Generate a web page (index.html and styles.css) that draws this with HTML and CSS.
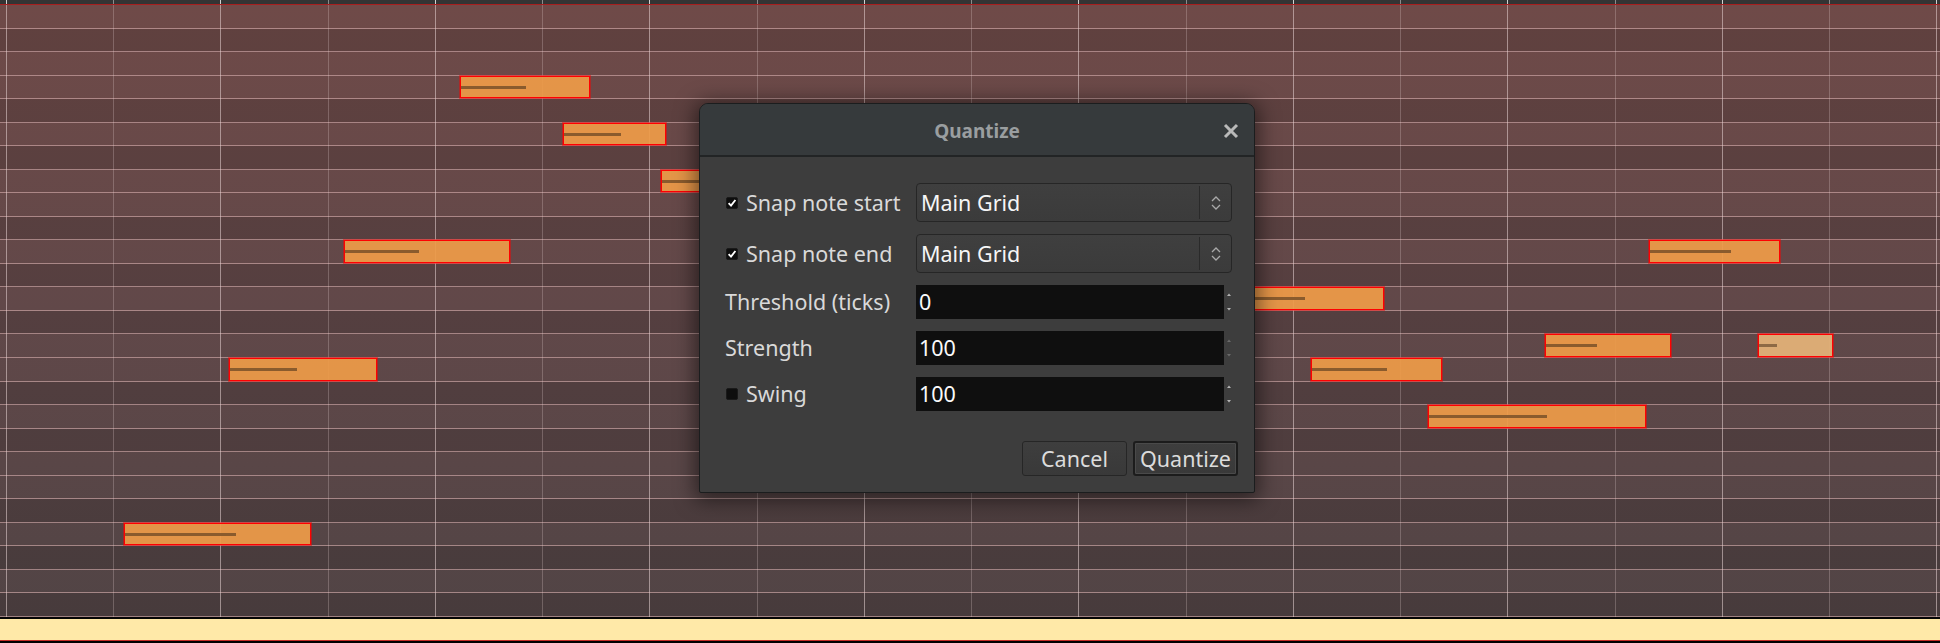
FILE: index.html
```html
<!DOCTYPE html>
<html lang="en">
<head>
<meta charset="utf-8">
<title>Piano roll – Quantize</title>
<link rel="stylesheet" href="styles.css">
</head>
<body>
<div class="app">
  <div class="ruler"></div>
  <div class="roll">
    <div class="row"></div>
    <div class="row dark"></div>
    <div class="row"></div>
    <div class="row">
      <div class="note" style="left:460px;width:130px"><i class="vel" style="width:65px"></i></div>
    </div>
    <div class="row dark"></div>
    <div class="row">
      <div class="note" style="left:563px;width:103px"><i class="vel" style="width:57px"></i></div>
    </div>
    <div class="row dark"></div>
    <div class="row">
      <div class="note" style="left:661px;width:120px"><i class="vel" style="width:70px"></i></div>
    </div>
    <div class="row"></div>
    <div class="row dark"></div>
    <div class="row">
      <div class="note" style="left:344px;width:166px"><i class="vel" style="width:74px"></i></div>
      <div class="note" style="left:1649px;width:131px"><i class="vel" style="width:81px"></i></div>
    </div>
    <div class="row dark"></div>
    <div class="row">
      <div class="note" style="left:1190px;width:194px"><i class="vel" style="width:114px"></i></div>
    </div>
    <div class="row dark"></div>
    <div class="row">
      <div class="note" style="left:1545px;width:126px"><i class="vel" style="width:51px"></i></div>
      <div class="note soft" style="left:1758px;width:75px"><i class="vel" style="width:18px"></i></div>
    </div>
    <div class="row">
      <div class="note" style="left:229px;width:148px"><i class="vel" style="width:67px"></i></div>
      <div class="note" style="left:1311px;width:131px"><i class="vel" style="width:75px"></i></div>
    </div>
    <div class="row dark"></div>
    <div class="row">
      <div class="note" style="left:1428px;width:218px"><i class="vel" style="width:118px"></i></div>
    </div>
    <div class="row dark"></div>
    <div class="row"></div>
    <div class="row"></div>
    <div class="row dark"></div>
    <div class="row">
      <div class="note" style="left:124px;width:187px"><i class="vel" style="width:111px"></i></div>
    </div>
    <div class="row dark"></div>
    <div class="row"></div>
    <div class="row dark"></div>
  </div>
  <div class="footer"></div>
</div>

<div class="dialog" role="dialog" aria-label="Quantize">
  <div class="titlebar">
    <span></span>
    <span class="title">Quantize</span>
    <button class="close" aria-label="Close">
      <svg width="16" height="16" viewBox="0 0 16 16"><path d="M2 2 L14 14 M14 2 L2 14" stroke="#b9b9b9" stroke-width="3" fill="none"/></svg>
    </button>
  </div>
  <div class="body">
    <div class="form">
      <label class="lbl"><span class="cb"><svg width="12" height="12" viewBox="0 0 12 12"><path d="M2.6 6.2 L5 8.6 L9.4 3" stroke="#fff" stroke-width="1.9" fill="none"/></svg></span>Snap note start</label>
      <div class="combo"><span class="combo-text">Main Grid</span><span class="combo-btn"><svg width="12" height="18" viewBox="0 0 12 18"><path d="M2 7 L6 3 L10 7 M2 11 L6 15 L10 11" stroke="#a9a9a9" stroke-width="1.3" fill="none"/></svg></span></div>

      <label class="lbl"><span class="cb"><svg width="12" height="12" viewBox="0 0 12 12"><path d="M2.6 6.2 L5 8.6 L9.4 3" stroke="#fff" stroke-width="1.9" fill="none"/></svg></span>Snap note end</label>
      <div class="combo"><span class="combo-text">Main Grid</span><span class="combo-btn"><svg width="12" height="18" viewBox="0 0 12 18"><path d="M2 7 L6 3 L10 7 M2 11 L6 15 L10 11" stroke="#a9a9a9" stroke-width="1.3" fill="none"/></svg></span></div>

      <label class="lbl">Threshold (ticks)</label>
      <div class="spin"><span class="field">0</span><span class="arrows"><svg width="6" height="20" viewBox="0 0 6 20"><path d="M1 4 L3 1.5 L5 4 Z M1 16 L3 18.5 L5 16 Z" fill="#b5b5b5"/></svg></span></div>

      <label class="lbl">Strength</label>
      <div class="spin"><span class="field">100</span><span class="arrows"><svg width="6" height="20" viewBox="0 0 6 20"><path d="M1 4 L3 1.5 L5 4 Z M1 16 L3 18.5 L5 16 Z" fill="#6a6a6a"/></svg></span></div>

      <label class="lbl"><span class="cb off"></span>Swing</label>
      <div class="spin"><span class="field">100</span><span class="arrows"><svg width="6" height="20" viewBox="0 0 6 20"><path d="M1 4 L3 1.5 L5 4 Z M1 16 L3 18.5 L5 16 Z" fill="#b5b5b5"/></svg></span></div>
    </div>
    <div class="actions">
      <button class="btn">Cancel</button>
      <button class="btn default">Quantize</button>
    </div>
  </div>
</div>
</body>
</html>
```

FILE: styles.css
```css
html, body {
  margin: 0;
  padding: 0;
  width: 1940px;
  height: 643px;
  overflow: hidden;
  background: #000;
}

.app {
  width: 1940px;
  height: 643px;
  display: flex;
  flex-direction: column;
}

.ruler {
  height: 4px;
  flex: none;
  background-color: #343434;
  background-image: repeating-linear-gradient(to right,
      #d2d2d2 0 1px, transparent 1px 107.25px,
      #8c8c8c 107.25px 108.25px, transparent 108.25px 214.5px);
  background-position: 6px 0;
  border-bottom: 1px solid #a81f1f;
}

.roll {
  position: relative;
  height: 612px;
  flex: none;
  display: flex;
  flex-direction: column;
  background: linear-gradient(to bottom, #6f4a48 0%, #614849 50%, #514445 100%);
}

.roll::after {
  content: "";
  position: absolute;
  inset: 0;
  pointer-events: none;
  background-image: repeating-linear-gradient(to right,
      rgba(232, 212, 212, 0.55) 0 1px, transparent 1px 107.25px,
      rgba(232, 212, 212, 0.26) 107.25px 108.25px, transparent 108.25px 214.5px);
  background-position: 6px 0;
}

.row {
  position: relative;
  flex: 1 1 0;
  box-sizing: border-box;
  border-bottom: 1px solid rgba(215, 175, 175, 0.62);
}

.row.dark {
  background: rgba(0, 0, 0, 0.12);
}

.note {
  position: absolute;
  top: 0;
  bottom: 0;
  z-index: 1;
  box-sizing: border-box;
  border: 1px solid #ff0000;
  box-shadow: 0 0 0 1px rgba(255, 0, 0, 0.45);
  background: rgba(238, 155, 72, 0.93);
}

.note.soft {
  background: rgba(226, 177, 120, 0.95);
}

.vel {
  position: absolute;
  left: 0;
  top: 9px;
  height: 3px;
  background: #8a5b2d;
}

.note.soft .vel {
  background: #8e6a45;
}

.footer {
  flex: none;
  height: 21px;
  background: #ffe9a8;
  border-top: 2px solid #050505;
  border-bottom: 1px solid #c42e27;
}

/* Dialog */
.dialog {
  position: absolute;
  z-index: 10;
  left: 699px;
  top: 103px;
  width: 556px;
  box-sizing: border-box;
  border: 1px solid #1b1d1e;
  border-radius: 9px 9px 2px 2px;
  background: #3d3d3d;
  box-shadow: 0 3px 20px 4px rgba(0, 0, 0, 0.5);
  overflow: hidden;
  font-family: "Noto Sans", "Open Sans", sans-serif;
}

.titlebar {
  height: 51px;
  background: #363a3c;
  border-bottom: 2px solid #222425;
  display: grid;
  grid-template-columns: 1fr auto 1fr;
  align-items: center;
  padding: 0 15px;
}

.title {
  font-weight: 700;
  font-size: 19px;
  color: #9a9ea0;
  padding-top: 2px;
}

.close {
  justify-self: end;
  width: 16px;
  height: 16px;
  padding: 0;
  margin-top: 2px;
  border: 0;
  background: none;
  display: flex;
}

.body {
  padding: 26px 16px 16px 25px;
}

.form {
  display: grid;
  grid-template-columns: 191px 1fr;
  row-gap: 12px;
  align-items: center;
  padding-right: 7px;
}

.lbl {
  display: flex;
  align-items: center;
  gap: 8px;
  font-size: 21.5px;
  color: #d9d9d9;
  white-space: nowrap;
  line-height: 30px;
}

.cb {
  width: 12px;
  height: 12px;
  margin-left: 1px;
  box-sizing: border-box;
  border-radius: 2px;
  background: #0e0e0e;
  border: 1px solid #1a1a1a;
  display: flex;
  flex: none;
}

.cb svg {
  margin: -1px;
}

.combo {
  height: 39px;
  box-sizing: border-box;
  border: 1px solid #262626;
  border-radius: 4px;
  background: linear-gradient(#3f3f3f, #3b3b3b);
  display: flex;
  align-items: center;
}

.combo-text {
  flex: 1;
  padding-left: 4px;
  font-size: 21.5px;
  color: #f6f6f6;
}

.combo-btn {
  width: 32px;
  height: 33px;
  box-sizing: border-box;
  border-left: 1px solid #2a2a2a;
  display: flex;
  align-items: center;
  justify-content: center;
}

.spin {
  display: flex;
  align-items: center;
  height: 34px;
}

.field {
  width: 308px;
  height: 34px;
  box-sizing: border-box;
  background: #0f0f0f;
  padding-left: 3px;
  font-size: 21.5px;
  line-height: 34px;
  color: #fafafa;
}

.arrows {
  width: 8px;
  display: flex;
  justify-content: flex-end;
}

.actions {
  display: flex;
  justify-content: flex-end;
  gap: 6px;
  margin-top: 30px;
}

.btn {
  width: 105px;
  height: 35px;
  box-sizing: border-box;
  padding: 0;
  border: 1px solid #262626;
  border-radius: 3px;
  background: linear-gradient(#3e3e3e, #393939);
  color: #dcdcdc;
  font-family: "Noto Sans", "Open Sans", sans-serif;
  font-size: 21.5px;
  line-height: 31px;
}

.btn.default {
  border: 2px solid #1c1c1c;
  box-shadow: inset 0 0 0 1px #4a4a4a;
  line-height: 29px;
}
```
